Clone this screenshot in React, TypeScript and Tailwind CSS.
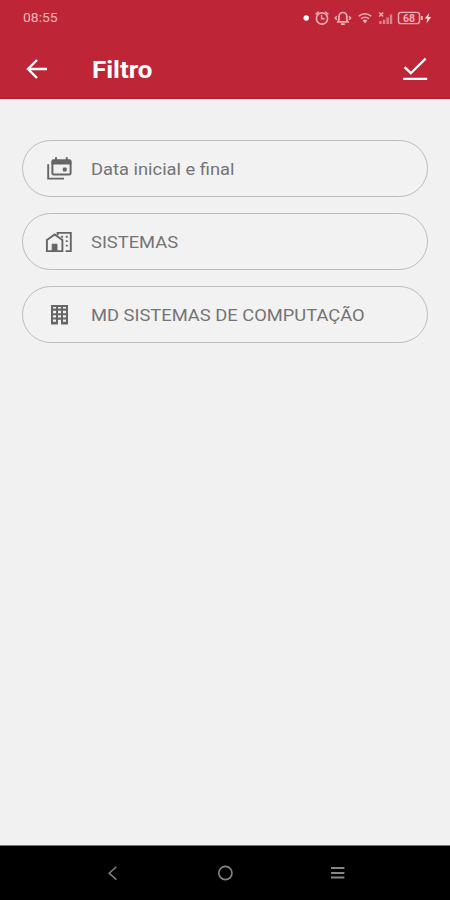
import type { ReactNode } from "react";

function CalendarIcon() {
  return (
    <svg width="28" height="28" viewBox="0 0 28 28" fill="none" stroke="#666">
      <path d="M3.2 9.2V23.6H19" strokeWidth="1.9" />
      <rect x="7.4" y="5.6" width="18.2" height="14" rx="1.4" strokeWidth="2" />
      <path d="M6.6 6a1.5 1.5 0 0 1 1.5-1.4h16.8A1.5 1.5 0 0 1 26.4 6v3.4H6.6Z" fill="#666" stroke="none" />
      <path d="M11 2.2v3M21.8 2.2v3" strokeWidth="2" />
      <rect x="17.8" y="12.6" width="4" height="3.8" rx="1" fill="#666" stroke="none" />
    </svg>
  );
}

function HomeWorkIcon() {
  return (
    <svg width="28" height="28" viewBox="0 0 28 28" fill="none" stroke="#666">
      <path d="M1.9 12.1 9.7 6.4l7.7 5.7v11H1.9Z" strokeWidth="1.9" />
      <path d="M7.2 23v-6.8h4.8V23Z" fill="#666" strokeWidth="1" />
      <path d="M12.6 7V4.9h13.2v18.2h-5.2" strokeWidth="1.9" />
      <path d="M16.2 8.7h1.9M20.8 8.7h1.9M20.8 13.1h1.9M20.8 17.6h1.9" strokeWidth="1.9" />
    </svg>
  );
}

function BuildingIcon() {
  return (
    <svg width="28" height="28" viewBox="0 0 28 28">
      <path
        fill="#666"
        fillRule="evenodd"
        d="M6 4h17v19.4h-7v-4.6h-3v4.6H6ZM8 6v1.6h3V6Zm5 0v1.6h3V6Zm5 0v1.6h3V6ZM8 9.8v2.4h3V9.8Zm5 0v2.4h3V9.8Zm5 0v2.4h3V9.8ZM8 14.2v2.2h3v-2.2Zm5 0v2.2h3v-2.2Zm5 0v2.2h3v-2.2ZM8 18.4v2.4h3v-2.4Zm10 0v2.4h3v-2.4Z"
      />
    </svg>
  );
}

function StatusIcons() {
  return (
    <svg width="132" height="18" viewBox="0 0 132 18" fill="none" stroke="#eeb0b6" strokeWidth="1.4">
      <circle cx="6.2" cy="9" r="2.7" fill="#fff" stroke="none" />
      {/* alarm */}
      <circle cx="22" cy="9.5" r="5.6" strokeWidth="1.6" />
      <path d="M21.6 6v3.8h3M15.6 5.4l3.2-2.6M28.4 5.4l-3.2-2.6" />
      {/* bell */}
      <path d="M38 12.8h9.8l-1-2V7.4a3.8 3.8 0 0 0-7.8 0v3.4ZM41 15.2h3.8" strokeWidth="1.7" />
      <path d="M36.8 7.2 35.2 9l1.6 1.8M49 7.2 50.6 9 49 10.8" strokeWidth="1.5" />
      {/* wifi */}
      <path d="M58.8 7.2q6.2-4.8 12.4 0M61 9.7q4-3 8 0" strokeWidth="1.5" />
      <path d="m62.6 11.3 2.4 3.2 2.4-3.2q-2.4-1.6-4.8 0Z" fill="#eeb0b6" stroke="none" />
      {/* signal */}
      <path d="M80.4 15v-3M84 15v-4.2M87.6 15V8.4M91 15V5.4" strokeWidth="2.4" opacity=".65" />
      <path d="m79.2 3.6 4 4m0-4-4 4" />
      {/* battery */}
      <rect x="98.5" y="3.4" width="21" height="11.2" rx="2.4" />
      <path d="M121.8 7v4" strokeWidth="2" />
      <text x="109" y="12.8" textAnchor="middle" fontSize="10.5" fontWeight="700" fill="#eeb0b6" stroke="none">68</text>
      <path d="m129.2 4-4.4 5.6h2.6l-1 4.8 4.8-6.4h-2.8Z" fill="#fbe4e6" stroke="none" />
    </svg>
  );
}

function Field({ icon, label }: { icon: ReactNode; label: string }) {
  return (
    <button className="flex h-[57px] w-full items-center rounded-full border border-[#bcbcbc] bg-[#f2f2f2] pl-[22px] text-left text-[17px] text-[#747474]">
      {icon}
      <span className="ml-[17.5px] origin-left scale-x-[1.078] whitespace-nowrap pt-[2px]">{label}</span>
    </button>
  );
}

export default function App() {
  return (
    <div className="flex h-[900px] w-[450px] flex-col overflow-hidden bg-[#f1f1f1] font-[Roboto,sans-serif]">
      <header className="h-[99px] shrink-0 border-b border-[#b01c2c] bg-[#be2536]">
        <div className="flex h-9 items-center justify-between pl-[22.5px] pr-[18px]">
          <span className="origin-left scale-x-[1.07] text-[13px] text-[#f0b5bb]">08:55</span>
          <StatusIcons />
        </div>
        <div className="flex h-[66px] items-center pl-[25px] pr-[22px]">
          <svg width="24" height="24" viewBox="0 0 24 24" fill="none" stroke="#fff" strokeWidth="2.4">
            <path d="M22 12H3M12 3l-9 9 9 9" />
          </svg>
          <h1 className="ml-[43px] origin-left scale-x-[1.08] pt-[1px] text-[24px] font-bold text-white">Filtro</h1>
          <svg className="ml-auto" width="26" height="24" viewBox="0 0 26 24" fill="none" stroke="#fff" strokeWidth="2.3">
            <path d="m2.6 10.2 6.2 6L23.6 1.6M1.2 21.8h24" />
          </svg>
        </div>
      </header>

      <main className="flex flex-1 flex-col gap-4 px-[22px] pt-[41px]">
        <Field icon={<CalendarIcon />} label="Data inicial e final" />
        <Field icon={<HomeWorkIcon />} label="SISTEMAS" />
        <Field icon={<BuildingIcon />} label="MD SISTEMAS DE COMPUTAÇÃO" />
      </main>

      <nav className="flex h-[55px] shrink-0 items-center justify-center gap-[88px] border-t border-[#777] bg-black">
        <svg width="24" height="24" viewBox="0 0 24 24" fill="none" stroke="#858585" strokeWidth="1.5">
          <path d="m15.4 5.8-7.2 6.4 7.2 6.4" />
        </svg>
        <svg width="24" height="24" viewBox="0 0 24 24" fill="none" stroke="#858585" strokeWidth="1.6">
          <circle cx="12.4" cy="12" r="6.6" />
        </svg>
        <svg width="24" height="24" viewBox="0 0 24 24" fill="none" stroke="#858585" strokeWidth="2">
          <path d="M6 7h13.4M6 12h13.4M6 16.6h13.4" />
        </svg>
      </nav>
    </div>
  );
}
